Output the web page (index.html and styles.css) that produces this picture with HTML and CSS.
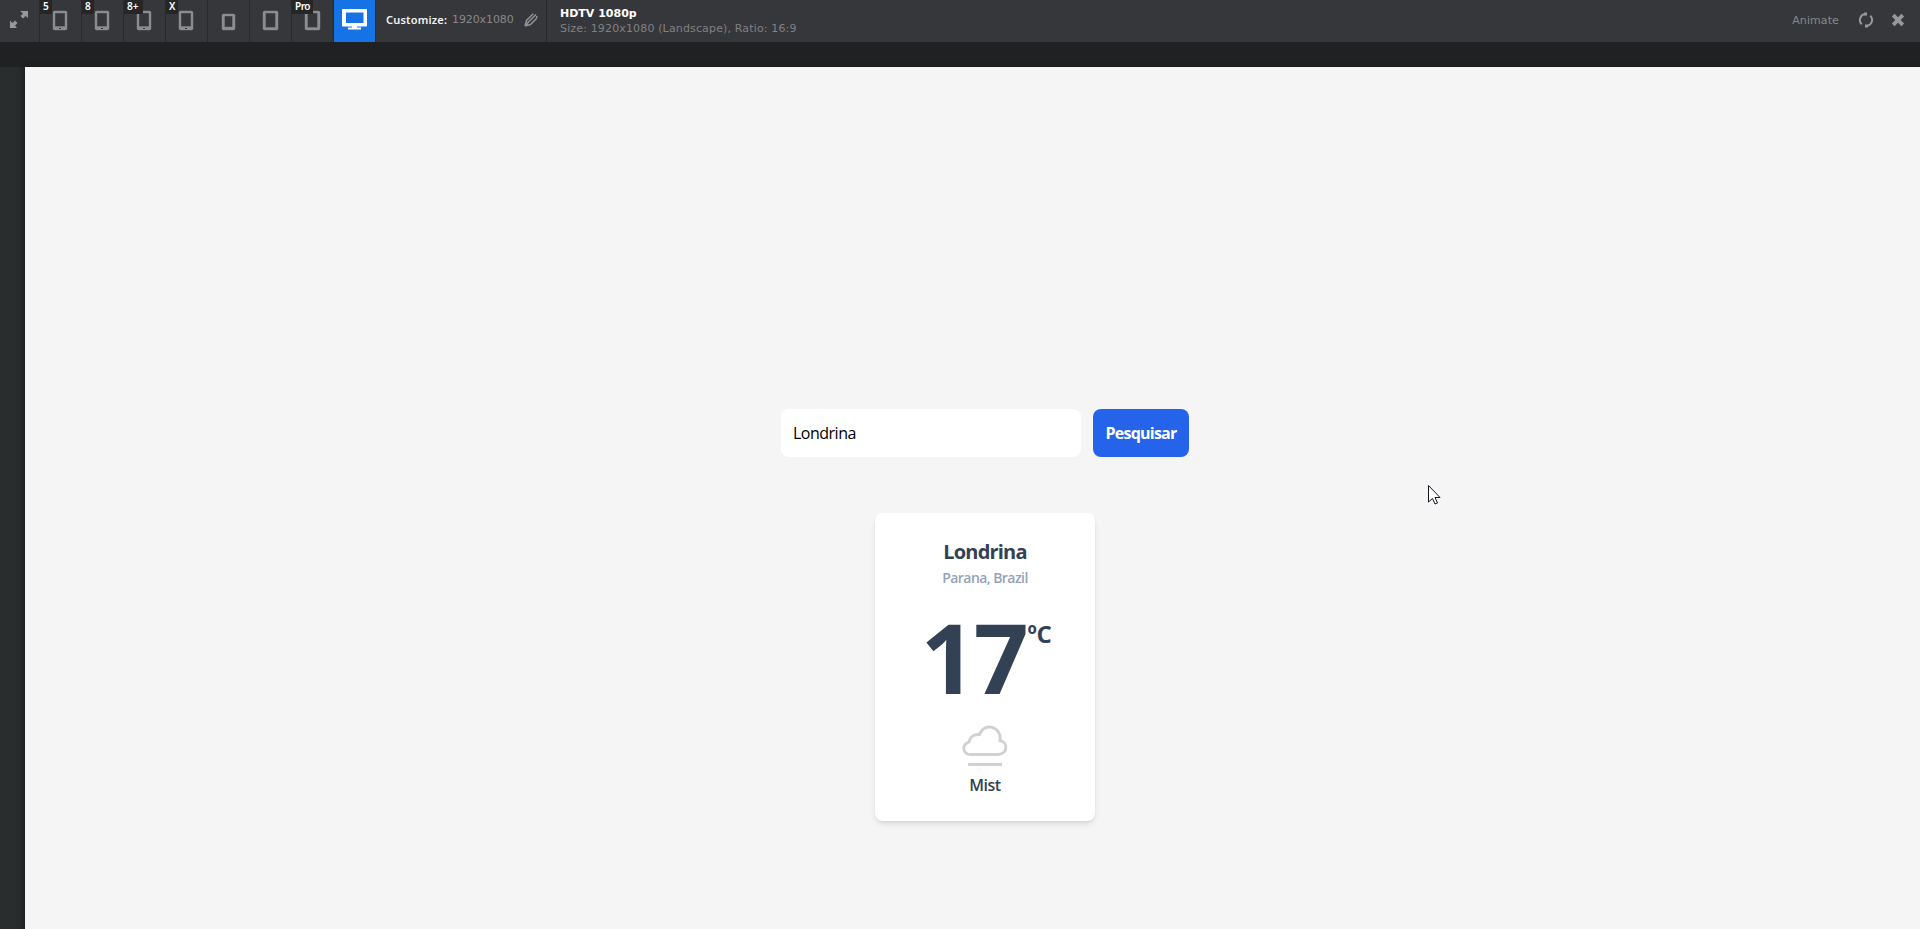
FILE: index.html
```html
<!DOCTYPE html>
<html lang="pt-BR">
<head>
<meta charset="utf-8">
<title>HDTV 1080p</title>
<link rel="stylesheet" href="styles.css">
</head>
<body>
<header class="toolbar">
  <div class="expand"><svg width="39" height="41" viewBox="0 0 39 41" fill="#97989a"><path d="M20 11h8v7l-2.500-2L23 18.500 20.500 16 23 13.500zM10 20.500l2.500 2.500 2.500-2.500 2.500 2.500-2.500 2.500 2 2.500h-7z"/></svg></div>
  <div class="device"><svg width="41" height="42" viewBox="0 0 41 42"><path class="metal" fill-rule="evenodd" d="M14 11h12l1 1v17l-1 1H14l-1-1V12zM15 13v13.500h10V13z"/><path class="hole" d="M19 28h2v1h-2z"/></svg><span class="tag">5</span></div>
  <div class="device"><svg width="41" height="42" viewBox="0 0 41 42"><path class="metal" fill-rule="evenodd" d="M14 11h12l1 1v17l-1 1H14l-1-1V12zM15 13v13.500h10V13z"/><path class="hole" d="M19 28h2v1h-2z"/></svg><span class="tag">8</span></div>
  <div class="device"><svg width="41" height="42" viewBox="0 0 41 42"><path class="metal" fill-rule="evenodd" d="M14 11h12l1 1v17l-1 1H14l-1-1V12zM15 13v13.500h10V13z"/><path class="hole" d="M19 28h2v1h-2z"/></svg><span class="tag wide">8+</span></div>
  <div class="device"><svg width="41" height="42" viewBox="0 0 41 42"><path class="metal" fill-rule="evenodd" d="M14 11h12l1 1v17l-1 1H14l-1-1V12zM15 13v13.500h10V13z"/><path class="hole" d="M19 28h2v1h-2z"/></svg><span class="tag">X</span></div>
  <div class="device"><svg width="41" height="42" viewBox="0 0 41 42"><path class="metal" fill-rule="evenodd" d="M15 14h11l1 1v14l-1 1H15l-1-1V15zM16.500 16v11h8V16z"/></svg></div>
  <div class="device"><svg width="41" height="42" viewBox="0 0 41 42"><path class="metal" fill-rule="evenodd" d="M14 11h13l1 1v17l-1 1H14l-1-1V12zM15.500 13v14.500h10V13z"/></svg></div>
  <div class="device"><svg width="41" height="42" viewBox="0 0 41 42"><path class="metal" fill-rule="evenodd" d="M14 11h13l1 1v17l-1 1H14l-1-1V12zM15.500 13v14.500h10V13z"/></svg><span class="tag wider">Pro</span></div>
  <div class="device active"><svg width="41" height="42" viewBox="0 0 41 42"><path fill="#fff" fill-rule="evenodd" d="M8.500 9h24l.5.5v16.500l-.5.500h-24l-.5-.5v-16.500zM12 12.500v10.500h17.500V12.500z"/><path fill="#fff" d="M18 26h5v1.500h4V29.500H14V27.500h4z"/></svg></div>
  <div class="customize"><b class="customize-label">Customize:</b><span class="customize-size">1920x1080</span><svg width="14" height="14" viewBox="0 0 14 14" fill="none" stroke="#909193" stroke-width="1.500"><path d="M1 13L2.500 7.500 8.500 1.500M1 13L6.500 11.500 12.500 5.500M3.500 10L10.500 3M8.500 1.500L9.500.800M12.500 5.500L12.800 3M10.500 3l1.500-1.500M2 12l2-2"/></svg></div>
  <div class="info"><b class="info-name">HDTV 1080p</b><span class="info-size">Size: 1920x1080 (Landscape), Ratio: 16:9</span></div>
  <div class="actions"><span class="animate">Animate</span>
    <svg class="reload" width="16" height="16" viewBox="0 0 16 16"><g fill="none" stroke="#97989a" stroke-width="2"><path d="M7 2.100A6 6 0 0 0 3.700 12.300M9 13.900A6 6 0 0 0 12.300 3.700"/></g><path fill="#97989a" d="M6 .5h3v3H6zM7 12.500h3v3H7z"/></svg>
    <svg width="14" height="14" viewBox="0 0 14 14"><path d="M2.200 2.200l9.600 9.600M11.800 2.200L2.200 11.800" stroke="#97989a" stroke-width="3.800"/></svg>
  </div>
</header>
<div class="stage">
  <main class="page">
    <form class="search"><input class="field" type="text" value="Londrina"><button class="submit" type="button">Pesquisar</button></form>
    <section class="card">
      <h1 class="city">Londrina</h1>
      <p class="region">Parana, Brazil</p>
      <div class="temp"><span class="degrees">17</span><span class="unit">ºC</span></div>
      <svg class="cloud" width="46" height="42" viewBox="0 0 46 42" fill="none" stroke="#d1d1d1" stroke-width="2.900"><path d="M8.500 29.500H36.500C46 28.500 46 17 38 15.800 40.500 1.500 22-3.500 17.500 9.500 12 9 8 12 7 17-1 20 1 29.500 8.500 29.500Z"/><path d="M6 39.500h34"/></svg>
      <p class="condition">Mist</p>
    </section>
  </main>
</div>
<svg class="cursor" width="13" height="20" viewBox="0 0 13 20"><path d="M.5.500v16.500l4-3.500 2.500 5.500 2.500-1-2.500-5.500h5z" fill="#fff" stroke="#15151f"/></svg>
</body>
</html>
```
FILE: styles.css
```css
* { box-sizing: border-box; }
body { margin: 0; height: 929px; overflow: hidden; background: #202123; font-family: "Open Sans", "Noto Sans", sans-serif; display: flex; flex-direction: column; }
svg { display: block; flex: none; }
p, h1 { margin: 0; }
.toolbar { height: 42px; flex: none; display: flex; background: #36373b; font: 11px "DejaVu Sans", sans-serif; color: #87888a; }
.expand { width: 39px; flex: none; }
.device { width: 42px; flex: none; position: relative; border-left: 1px solid #28292b; }
.active { background: #1673e6; }
.metal { fill: #8c8d8f; stroke: #8c8d8f; stroke-width: .4px; }
.hole { fill: #36373b; }
.tag { position: absolute; left: 0; top: 0; width: 12px; height: 14px; padding-left: 3px; background: #262627; color: #fff; font: 600 10px/12px "Noto Sans", sans-serif; }
.wide { width: 19px; }
.wider { width: 21px; letter-spacing: -.5px; }
.customize { width: 171px; flex: none; display: flex; align-items: center; padding: 0 0 3px 10px; border-left: 1px solid #28292b; }
.customize-label { width: 66px; color: #f2f2f2; font: 600 11px "Noto Sans", sans-serif; letter-spacing: .2px; }
.customize-size { width: 72px; letter-spacing: -.1px; }
.info { border-left: 1px solid #28292b; padding: 6px 0 0 13px; display: flex; flex-direction: column; line-height: 15px; white-space: nowrap; }
.info-name { color: #fff; }
.info-size { color: #808183; letter-spacing: .15px; }
.actions { margin-left: auto; display: flex; align-items: center; padding: 0 15px 2px 0; }
.animate { margin-right: 19px; letter-spacing: .1px; }
.reload { margin-right: 17px; }
.stage { flex: 1; padding: 25px 0 0 25px; overflow: hidden; background: linear-gradient(90deg, #292d2e 0, #292d2e 15px, #242627 25px) 0 25px no-repeat, #202123; }
.page { width: 1920px; height: 900px; padding-top: 342px; background: #f5f5f5; display: flex; flex-direction: column; align-items: center; box-shadow: 0 0 4px #191919; }
.search { display: flex; gap: 12px; margin-bottom: 56px; }
.field { width: 300px; height: 48px; border: 0; border-radius: 8px; padding: 0 12px; background: #fff; color: #000; font: 16px "Open Sans", sans-serif; letter-spacing: -.5px; outline: 0; }
.submit { width: 96px; height: 48px; border: 0; border-radius: 8px; padding: 0; background: #2563eb; color: #fff; font: 700 16px "Open Sans", sans-serif; letter-spacing: -.75px; white-space: nowrap; }
.card { width: 220px; height: 308px; border-radius: 8px; padding-top: 25px; background: #fff; color: #334155; display: flex; flex-direction: column; align-items: center; box-shadow: 0 4px 6px -1px rgba(0,0,0,.1), 0 2px 4px -2px rgba(0,0,0,.1); }
.city { font-size: 20px; line-height: 28px; font-weight: 700; letter-spacing: -.8px; }
.region { margin-top: 2px; font-size: 14px; line-height: 20px; font-weight: 600; color: #94a3b8; letter-spacing: -.55px; }
.temp { display: flex; height: 96px; margin: 21px 0 0 2px; }
.degrees { font-size: 96px; line-height: 96px; font-weight: 700; letter-spacing: -2px; }
.unit { margin: 9px 0 0 1px; font-size: 24px; line-height: 32px; font-weight: 700; letter-spacing: -.5px; }
.cloud { margin-top: 20px; }
.condition { margin-top: 6px; font-size: 16px; line-height: 24px; font-weight: 600; letter-spacing: -.5px; }
.cursor { position: absolute; left: 1428px; top: 485px; }
```
